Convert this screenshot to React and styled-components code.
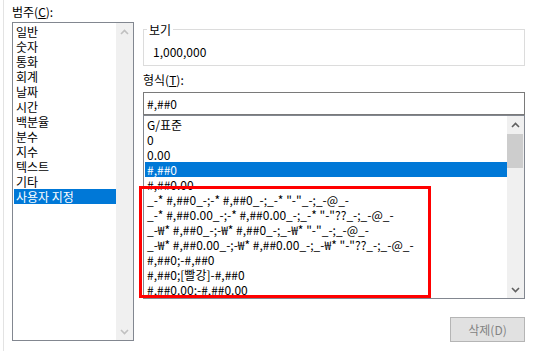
import React from "react";
import styled, { createGlobalStyle } from "styled-components";

const GlobalStyle = createGlobalStyle`
  html, body { margin: 0; padding: 0; background: #ffffff; }
`;

const Page = styled.div`
  position: relative;
  width: 533px;
  height: 351px;
  overflow: hidden;
  background: #ffffff;
  font-family: "Noto Sans CJK KR", "Liberation Sans", sans-serif;
  font-size: 12px;
  color: #000000;
`;

const Frame = styled.div`
  margin-left: 3px;
  width: 526px;
  height: 351px;
  padding: 4px 5px 0 8px;
  box-sizing: border-box;
  box-sizing: content-box;
  border-left: 1px solid #e3e3e3;
  border-right: 1px solid #e3e3e3;
  display: flex;
  gap: 9px;
`;

const LeftColumn = styled.div`
  width: 122px;
  display: flex;
  flex-direction: column;
  gap: 3px;
`;

const RightColumn = styled.div`
  width: 382px;
  padding-top: 18px;
  display: flex;
  flex-direction: column;
`;

const Label = styled.div`
  height: 15px;
  line-height: 15px;
  white-space: nowrap;
  margin-left: ${(p) => p.$indent || 0}px;
  margin-top: ${(p) => p.$top || 0}px;
`;

const Key = styled.span`
  text-decoration: underline;
`;

const ListBox = styled.div`
  height: ${(p) => p.$height}px;
  box-sizing: border-box;
  border: 1px solid #828790;
  display: flex;
  background: #ffffff;
`;

const Items = styled.div`
  flex: 1;
  padding: 1px 0 0 1px;
  overflow: hidden;
`;

const Item = styled.div`
  height: 15px;
  line-height: 15px;
  padding-left: 2px;
  white-space: pre;
  background: ${(p) => (p.$selected ? "#0078d7" : "transparent")};
  color: ${(p) => (p.$selected ? "#ffffff" : "#000000")};
`;

const ScrollBar = styled.div`
  width: 17px;
  background: #f0f0f0;
  display: flex;
  flex-direction: column;
`;

const ArrowButton = styled.div`
  height: 17px;
  display: flex;
  align-items: center;
  justify-content: center;
  margin-top: ${(p) => (p.$bottom ? "auto" : "0")};
`;

const Thumb = styled.div`
  height: 34px;
  margin: 1px 1px 0 0;
  background: #cdcdcd;
`;

const Preview = styled.fieldset`
  margin: 0;
  height: 44px;
  box-sizing: border-box;
  padding: 0 0 0 3px;
  border: 1px solid #dcdcdc;
  min-width: 0;
`;

const Legend = styled.legend`
  padding: 0 2px;
  line-height: 15px;
  height: 15px;
`;

const PreviewValue = styled.div`
  margin: 7px 0 0 6px;
  line-height: 15px;
`;

const FormatInput = styled.div`
  height: 23px;
  box-sizing: border-box;
  border: 1px solid #7a7a7a;
  padding-left: 3px;
  line-height: 21px;
  margin-top: 5px;
`;

const DeleteButton = styled.div`
  align-self: flex-end;
  width: 75px;
  height: 25px;
  box-sizing: border-box;
  margin-top: 18px;
  background: #e1e1e1;
  border: 1px solid #b5b5b5;
  color: #838383;
  display: flex;
  align-items: center;
  justify-content: center;
`;

const Highlight = styled.div`
  position: absolute;
  left: 139px;
  top: 186px;
  width: 292px;
  height: 112px;
  box-sizing: border-box;
  border: 3px solid #ff0000;
  pointer-events: none;
`;

const Chevron = ({ up, color }) => (
  <svg width="9" height="6" viewBox="0 0 9 6">
    <polyline
      points={up ? "1,5 4.5,1.5 8,5" : "1,1 4.5,4.5 8,1"}
      fill="none"
      stroke={color}
      strokeWidth="1.6"
    />
  </svg>
);

const categories = [
  "일반",
  "숫자",
  "통화",
  "회계",
  "날짜",
  "시간",
  "백분율",
  "분수",
  "지수",
  "텍스트",
  "기타",
  "사용자 지정",
];

const formats = [
  "G/표준",
  "0",
  "0.00",
  "#,##0",
  "#,##0.00",
  '_-* #,##0_-;-* #,##0_-;_-* "-"_-;_-@_-',
  '_-* #,##0.00_-;-* #,##0.00_-;_-* "-"??_-;_-@_-',
  '_-₩* #,##0_-;-₩* #,##0_-;_-₩* "-"_-;_-@_-',
  '_-₩* #,##0.00_-;-₩* #,##0.00_-;_-₩* "-"??_-;_-@_-',
  "#,##0;-#,##0",
  "#,##0;[빨강]-#,##0",
  "#,##0.00;-#,##0.00",
  "#,##0.00;[빨강]-#,##0.00",
];

const App = () => {
  return (
    <Page>
      <GlobalStyle />
      <Frame>
        <LeftColumn>
          <Label>
            범주(<Key>C</Key>):
          </Label>
          <ListBox $height={319}>
            <Items>
              {categories.map((c) => (
                <Item key={c} $selected={c === "사용자 지정"}>
                  {c}
                </Item>
              ))}
            </Items>
            <ScrollBar>
              <ArrowButton>
                <Chevron up color="#c0c0c0" />
              </ArrowButton>
              <ArrowButton $bottom>
                <Chevron color="#c0c0c0" />
              </ArrowButton>
            </ScrollBar>
          </ListBox>
        </LeftColumn>
        <RightColumn>
          <Preview>
            <Legend>보기</Legend>
            <PreviewValue>1,000,000</PreviewValue>
          </Preview>
          <Label $top={6}>
            형식(<Key>T</Key>):
          </Label>
          <FormatInput>#,##0</FormatInput>
          <ListBox $height={184}>
            <Items>
              {formats.map((f) => (
                <Item key={f} $selected={f === "#,##0"}>
                  {f}
                </Item>
              ))}
            </Items>
            <ScrollBar>
              <ArrowButton>
                <Chevron up color="#606060" />
              </ArrowButton>
              <Thumb />
              <ArrowButton $bottom>
                <Chevron color="#606060" />
              </ArrowButton>
            </ScrollBar>
          </ListBox>
          <DeleteButton>삭제(D)</DeleteButton>
        </RightColumn>
      </Frame>
      <Highlight />
    </Page>
  );
};

export default App;
